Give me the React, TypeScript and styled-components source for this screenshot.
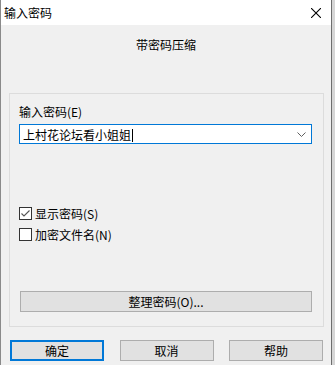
import React from "react";
import styled, { createGlobalStyle } from "styled-components";

const Global = createGlobalStyle`
  html, body { margin: 0; padding: 0; }
  body {
    background: #d6d6d6;
    font-family: "Noto Sans CJK SC", "Microsoft YaHei", sans-serif;
    font-size: 12px;
    color: #000;
  }
`;

const Window = styled.div`
  width: 330px;
  height: 365px;
  border-left: 1px solid #8a8a8a;
  border-right: 1px solid #6e6e6e;
  background: #f0f0f0;
  display: flex;
  flex-direction: column;
  overflow: hidden;
`;

const TitleBar = styled.div`
  height: 25px;
  flex-shrink: 0;
  background: #ffffff;
  display: flex;
  align-items: center;
  justify-content: space-between;
  padding: 0 10px 0 3px;
  font-size: 12px;
  line-height: 16px;
`;

const CloseWrap = styled.span`
  display: flex;
  width: 10px;
  height: 10px;
  flex-shrink: 0;
`;

const Subtitle = styled.div`
  margin-top: 12px;
  text-align: center;
  line-height: 16px;
  font-size: 12px;
`;

const Group = styled.div`
  box-sizing: border-box;
  margin: 40px 7px 0 8px;
  height: 234px;
  flex-shrink: 0;
  border: 1px solid #dcdcdc;
  padding: 10px 11px 0 9px;
  display: flex;
  flex-direction: column;
`;

const Label = styled.div`
  line-height: 16px;
  height: 16px;
`;

const Combo = styled.div`
  margin-top: 4px;
  height: 18px;
  border: 1px solid #0078d7;
  background: #fff;
  display: flex;
  align-items: center;
  justify-content: space-between;
  padding: 0 5px 0 3px;
  font-size: 12px;
`;

const Caret = styled.span`
  display: inline-block;
  width: 1px;
  height: 13px;
  background: #000;
  margin-left: 1px;
  vertical-align: -2px;
`;

const CheckRow = styled.div<{ $first?: boolean }>`
  height: 21px;
  display: flex;
  align-items: center;
  gap: 3px;
  margin-top: ${(p) => (p.$first ? "59px" : "0")};
`;

const Box = styled.div`
  width: 11px;
  height: 11px;
  border: 1px solid #333;
  background: #fff;
  display: flex;
  align-items: center;
  justify-content: center;
`;

const Button = styled.div<{ $default?: boolean }>`
  box-sizing: border-box;
  height: 21px;
  background: #e1e1e1;
  border: ${(p) => (p.$default ? "2px solid #0078d7" : "1px solid #adadad")};
  display: flex;
  align-items: center;
  justify-content: center;
  line-height: 16px;
`;

const WideButton = styled(Button)`
  margin-top: 46px;
  margin-left: 1px;
`;

const Footer = styled.div`
  margin: 13px 8px 0 9px;
  display: flex;
  justify-content: space-between;
  flex-shrink: 0;
`;

const FooterButton = styled(Button)`
  width: 94px;
  height: 21px;
`;

export default function App() {
  return (
    <>
      <Global />
      <Window>
        <TitleBar>
          <span>输入密码</span>
          <CloseWrap>
            <svg width="10" height="10" viewBox="0 0 10 10">
              <path d="M0 0 L10 10 M10 0 L0 10" stroke="#000000" strokeWidth="1.1" fill="none" />
            </svg>
          </CloseWrap>
        </TitleBar>
        <Subtitle>带密码压缩</Subtitle>
        <Group>
          <Label>输入密码(E)</Label>
          <Combo>
            <span>
              上村花论坛看小姐姐<Caret />
            </span>
            <svg width="9" height="5" viewBox="0 0 9 5">
              <path d="M0.5 0.5 L4.5 4.5 L8.5 0.5" stroke="#606060" strokeWidth="1" fill="none" />
            </svg>
          </Combo>
          <CheckRow $first>
            <Box>
              <svg width="11" height="11" viewBox="0 0 11 11">
                <path d="M1.5 5.5 L4 8 L9.5 2.5" stroke="#555" strokeWidth="1.1" fill="none" />
              </svg>
            </Box>
            <span>显示密码(S)</span>
          </CheckRow>
          <CheckRow>
            <Box />
            <span>加密文件名(N)</span>
          </CheckRow>
          <WideButton>整理密码(O)...</WideButton>
        </Group>
        <Footer>
          <FooterButton $default>确定</FooterButton>
          <FooterButton>取消</FooterButton>
          <FooterButton>帮助</FooterButton>
        </Footer>
      </Window>
    </>
  );
}
